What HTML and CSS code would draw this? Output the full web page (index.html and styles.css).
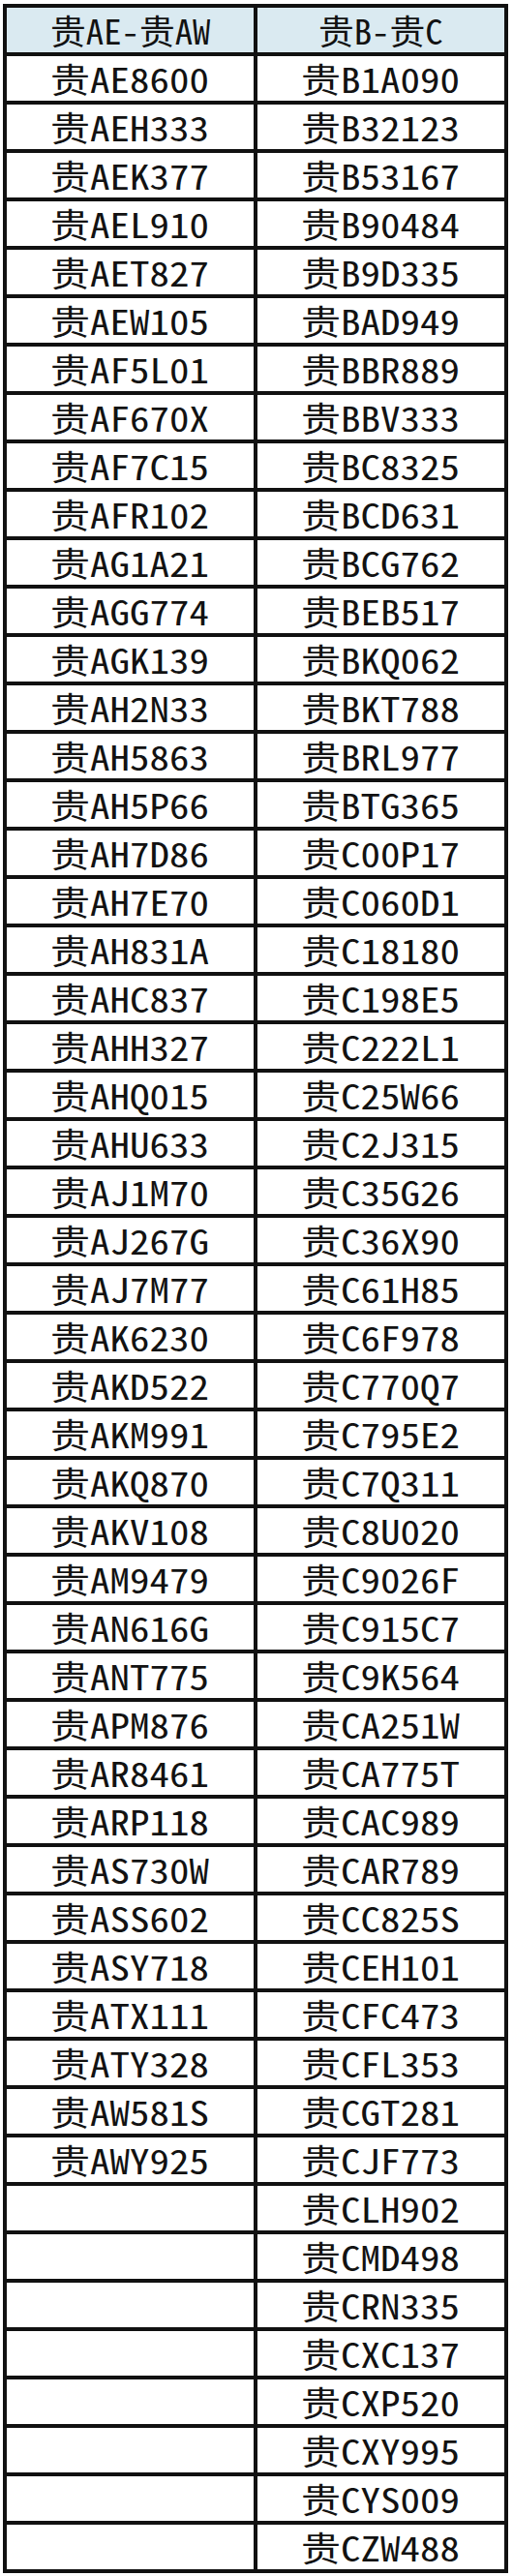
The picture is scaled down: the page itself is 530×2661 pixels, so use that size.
FILE: index.html
```html
<!DOCTYPE html>
<html lang="zh">
<head>
<meta charset="utf-8">
<link rel="stylesheet" href="styles.css">
</head>
<body>
<table class="plates">
<thead>
<tr><th><span class="t">贵AE-贵AW</span></th><th><span class="t">贵B-贵C</span></th></tr>
</thead>
<tbody>
<tr><td><span class="v">贵AE8600</span></td><td><span class="v">贵B1A090</span></td></tr>
<tr><td><span class="v">贵AEH333</span></td><td><span class="v">贵B32123</span></td></tr>
<tr><td><span class="v">贵AEK377</span></td><td><span class="v">贵B53167</span></td></tr>
<tr><td><span class="v">贵AEL910</span></td><td><span class="v">贵B90484</span></td></tr>
<tr><td><span class="v">贵AET827</span></td><td><span class="v">贵B9D335</span></td></tr>
<tr><td><span class="v">贵AEW105</span></td><td><span class="v">贵BAD949</span></td></tr>
<tr><td><span class="v">贵AF5L01</span></td><td><span class="v">贵BBR889</span></td></tr>
<tr><td><span class="v">贵AF670X</span></td><td><span class="v">贵BBV333</span></td></tr>
<tr><td><span class="v">贵AF7C15</span></td><td><span class="v">贵BC8325</span></td></tr>
<tr><td><span class="v">贵AFR102</span></td><td><span class="v">贵BCD631</span></td></tr>
<tr><td><span class="v">贵AG1A21</span></td><td><span class="v">贵BCG762</span></td></tr>
<tr><td><span class="v">贵AGG774</span></td><td><span class="v">贵BEB517</span></td></tr>
<tr><td><span class="v">贵AGK139</span></td><td><span class="v">贵BKQ062</span></td></tr>
<tr><td><span class="v">贵AH2N33</span></td><td><span class="v">贵BKT788</span></td></tr>
<tr><td><span class="v">贵AH5863</span></td><td><span class="v">贵BRL977</span></td></tr>
<tr><td><span class="v">贵AH5P66</span></td><td><span class="v">贵BTG365</span></td></tr>
<tr><td><span class="v">贵AH7D86</span></td><td><span class="v">贵C00P17</span></td></tr>
<tr><td><span class="v">贵AH7E70</span></td><td><span class="v">贵C060D1</span></td></tr>
<tr><td><span class="v">贵AH831A</span></td><td><span class="v">贵C18180</span></td></tr>
<tr><td><span class="v">贵AHC837</span></td><td><span class="v">贵C198E5</span></td></tr>
<tr><td><span class="v">贵AHH327</span></td><td><span class="v">贵C222L1</span></td></tr>
<tr><td><span class="v">贵AHQ015</span></td><td><span class="v">贵C25W66</span></td></tr>
<tr><td><span class="v">贵AHU633</span></td><td><span class="v">贵C2J315</span></td></tr>
<tr><td><span class="v">贵AJ1M70</span></td><td><span class="v">贵C35G26</span></td></tr>
<tr><td><span class="v">贵AJ267G</span></td><td><span class="v">贵C36X90</span></td></tr>
<tr><td><span class="v">贵AJ7M77</span></td><td><span class="v">贵C61H85</span></td></tr>
<tr><td><span class="v">贵AK6230</span></td><td><span class="v">贵C6F978</span></td></tr>
<tr><td><span class="v">贵AKD522</span></td><td><span class="v">贵C770Q7</span></td></tr>
<tr><td><span class="v">贵AKM991</span></td><td><span class="v">贵C795E2</span></td></tr>
<tr><td><span class="v">贵AKQ870</span></td><td><span class="v">贵C7Q311</span></td></tr>
<tr><td><span class="v">贵AKV108</span></td><td><span class="v">贵C8U020</span></td></tr>
<tr><td><span class="v">贵AM9479</span></td><td><span class="v">贵C9026F</span></td></tr>
<tr><td><span class="v">贵AN616G</span></td><td><span class="v">贵C915C7</span></td></tr>
<tr><td><span class="v">贵ANT775</span></td><td><span class="v">贵C9K564</span></td></tr>
<tr><td><span class="v">贵APM876</span></td><td><span class="v">贵CA251W</span></td></tr>
<tr><td><span class="v">贵AR8461</span></td><td><span class="v">贵CA775T</span></td></tr>
<tr><td><span class="v">贵ARP118</span></td><td><span class="v">贵CAC989</span></td></tr>
<tr><td><span class="v">贵AS730W</span></td><td><span class="v">贵CAR789</span></td></tr>
<tr><td><span class="v">贵ASS602</span></td><td><span class="v">贵CC825S</span></td></tr>
<tr><td><span class="v">贵ASY718</span></td><td><span class="v">贵CEH101</span></td></tr>
<tr><td><span class="v">贵ATX111</span></td><td><span class="v">贵CFC473</span></td></tr>
<tr><td><span class="v">贵ATY328</span></td><td><span class="v">贵CFL353</span></td></tr>
<tr><td><span class="v">贵AW581S</span></td><td><span class="v">贵CGT281</span></td></tr>
<tr><td><span class="v">贵AWY925</span></td><td><span class="v">贵CJF773</span></td></tr>
<tr><td></td><td><span class="v">贵CLH902</span></td></tr>
<tr><td></td><td><span class="v">贵CMD498</span></td></tr>
<tr><td></td><td><span class="v">贵CRN335</span></td></tr>
<tr><td></td><td><span class="v">贵CXC137</span></td></tr>
<tr><td></td><td><span class="v">贵CXP520</span></td></tr>
<tr><td></td><td><span class="v">贵CXY995</span></td></tr>
<tr><td></td><td><span class="v">贵CYS009</span></td></tr>
<tr><td></td><td><span class="v">贵CZW488</span></td></tr>
</tbody>
</table>
</body>
</html>
```

FILE: styles.css
```css
html, body {
  margin: 0;
  padding: 0;
  background: #ffffff;
}

body {
  padding: 4px 0 0 3px;
}

.plates {
  border-collapse: collapse;
  width: 522px;
  table-layout: fixed;
  font-family: "Noto Sans CJK SC", sans-serif;
  font-feature-settings: "hwid" 1;
  font-size: 35px;
  color: #121212;
}

.plates th,
.plates td {
  border: 4px solid #111111;
  height: 46px;
  padding: 0;
  text-align: center;
  vertical-align: middle;
  font-weight: normal;
  line-height: 46px;
  white-space: nowrap;
}

.plates th {
  background: #daeaf1;
}

.v,
.t {
  display: inline-block;
  transform-origin: 50% 50%;
}

.v {
  transform: scaleX(1.17);
}

.t {
  transform: scaleX(1.05);
}
```
